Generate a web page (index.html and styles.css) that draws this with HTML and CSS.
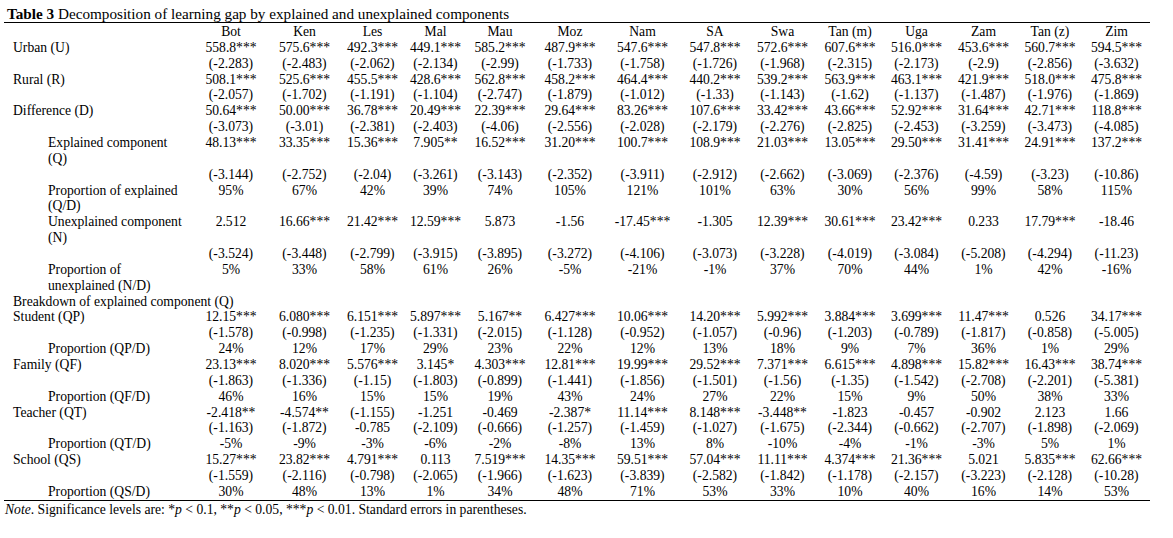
FILE: index.html
```html
<!DOCTYPE html>
<html>
<head>
<meta charset="utf-8">
<link rel="stylesheet" href="styles.css">
</head>
<body>
<div class="page">
  <div class="title"><b>Table 3</b> Decomposition of learning gap by explained and unexplained components</div>
  <table class="tbl">
    <colgroup>
      <col class="c-label"><col class="c82"><col class="c65"><col class="c71"><col class="c55"><col class="c74"><col class="c66"><col class="c79"><col class="c66"><col class="c69"><col class="c66"><col class="c67"><col class="c67"><col class="c66"><col class="c67">
    </colgroup>
    <thead>
      <tr class="head"><th></th><th>Bot</th><th>Ken</th><th>Les</th><th>Mal</th><th>Mau</th><th>Moz</th><th>Nam</th><th>SA</th><th>Swa</th><th>Tan (m)</th><th>Uga</th><th>Zam</th><th>Tan (z)</th><th>Zim</th></tr>
    </thead>
    <tbody>
      <tr><td class="lbl">Urban (U)</td><td>558.8***</td><td>575.6***</td><td>492.3***</td><td>449.1***</td><td>585.2***</td><td>487.9***</td><td>547.6***</td><td>547.8***</td><td>572.6***</td><td>607.6***</td><td>516.0***</td><td>453.6***</td><td>560.7***</td><td>594.5***</td></tr>
      <tr><td class="lbl"></td><td>(-2.283)</td><td>(-2.483)</td><td>(-2.062)</td><td>(-2.134)</td><td>(-2.99)</td><td>(-1.733)</td><td>(-1.758)</td><td>(-1.726)</td><td>(-1.968)</td><td>(-2.315)</td><td>(-2.173)</td><td>(-2.9)</td><td>(-2.856)</td><td>(-3.632)</td></tr>
      <tr><td class="lbl">Rural (R)</td><td>508.1***</td><td>525.6***</td><td>455.5***</td><td>428.6***</td><td>562.8***</td><td>458.2***</td><td>464.4***</td><td>440.2***</td><td>539.2***</td><td>563.9***</td><td>463.1***</td><td>421.9***</td><td>518.0***</td><td>475.8***</td></tr>
      <tr><td class="lbl"></td><td>(-2.057)</td><td>(-1.702)</td><td>(-1.191)</td><td>(-1.104)</td><td>(-2.747)</td><td>(-1.879)</td><td>(-1.012)</td><td>(-1.33)</td><td>(-1.143)</td><td>(-1.62)</td><td>(-1.137)</td><td>(-1.487)</td><td>(-1.976)</td><td>(-1.869)</td></tr>
      <tr><td class="lbl">Difference (D)</td><td>50.64***</td><td>50.00***</td><td>36.78***</td><td>20.49***</td><td>22.39***</td><td>29.64***</td><td>83.26***</td><td>107.6***</td><td>33.42***</td><td>43.66***</td><td>52.92***</td><td>31.64***</td><td>42.71***</td><td>118.8***</td></tr>
      <tr><td class="lbl"></td><td>(-3.073)</td><td>(-3.01)</td><td>(-2.381)</td><td>(-2.403)</td><td>(-4.06)</td><td>(-2.556)</td><td>(-2.028)</td><td>(-2.179)</td><td>(-2.276)</td><td>(-2.825)</td><td>(-2.453)</td><td>(-3.259)</td><td>(-3.473)</td><td>(-4.085)</td></tr>
      <tr><td class="lbl ind">Explained component<br>(Q)</td><td>48.13***</td><td>33.35***</td><td>15.36***</td><td>7.905**</td><td>16.52***</td><td>31.20***</td><td>100.7***</td><td>108.9***</td><td>21.03***</td><td>13.05***</td><td>29.50***</td><td>31.41***</td><td>24.91***</td><td>137.2***</td></tr>
      <tr><td class="lbl"></td><td>(-3.144)</td><td>(-2.752)</td><td>(-2.04)</td><td>(-3.261)</td><td>(-3.143)</td><td>(-2.352)</td><td>(-3.911)</td><td>(-2.912)</td><td>(-2.662)</td><td>(-3.069)</td><td>(-2.376)</td><td>(-4.59)</td><td>(-3.23)</td><td>(-10.86)</td></tr>
      <tr><td class="lbl ind">Proportion of explained<br>(Q/D)</td><td>95%</td><td>67%</td><td>42%</td><td>39%</td><td>74%</td><td>105%</td><td>121%</td><td>101%</td><td>63%</td><td>30%</td><td>56%</td><td>99%</td><td>58%</td><td>115%</td></tr>
      <tr><td class="lbl ind">Unexplained component<br>(N)</td><td>2.512</td><td>16.66***</td><td>21.42***</td><td>12.59***</td><td>5.873</td><td>-1.56</td><td>-17.45***</td><td>-1.305</td><td>12.39***</td><td>30.61***</td><td>23.42***</td><td>0.233</td><td>17.79***</td><td>-18.46</td></tr>
      <tr><td class="lbl"></td><td>(-3.524)</td><td>(-3.448)</td><td>(-2.799)</td><td>(-3.915)</td><td>(-3.895)</td><td>(-3.272)</td><td>(-4.106)</td><td>(-3.073)</td><td>(-3.228)</td><td>(-4.019)</td><td>(-3.084)</td><td>(-5.208)</td><td>(-4.294)</td><td>(-11.23)</td></tr>
      <tr><td class="lbl ind">Proportion of<br>unexplained (N/D)</td><td>5%</td><td>33%</td><td>58%</td><td>61%</td><td>26%</td><td>-5%</td><td>-21%</td><td>-1%</td><td>37%</td><td>70%</td><td>44%</td><td>1%</td><td>42%</td><td>-16%</td></tr>
      <tr><td class="lbl wide" colspan="15">Breakdown of explained component (Q)</td></tr>
      <tr><td class="lbl">Student (QP)</td><td>12.15***</td><td>6.080***</td><td>6.151***</td><td>5.897***</td><td>5.167**</td><td>6.427***</td><td>10.06***</td><td>14.20***</td><td>5.992***</td><td>3.884***</td><td>3.699***</td><td>11.47***</td><td>0.526</td><td>34.17***</td></tr>
      <tr><td class="lbl"></td><td>(-1.578)</td><td>(-0.998)</td><td>(-1.235)</td><td>(-1.331)</td><td>(-2.015)</td><td>(-1.128)</td><td>(-0.952)</td><td>(-1.057)</td><td>(-0.96)</td><td>(-1.203)</td><td>(-0.789)</td><td>(-1.817)</td><td>(-0.858)</td><td>(-5.005)</td></tr>
      <tr><td class="lbl ind">Proportion (QP/D)</td><td>24%</td><td>12%</td><td>17%</td><td>29%</td><td>23%</td><td>22%</td><td>12%</td><td>13%</td><td>18%</td><td>9%</td><td>7%</td><td>36%</td><td>1%</td><td>29%</td></tr>
      <tr><td class="lbl">Family (QF)</td><td>23.13***</td><td>8.020***</td><td>5.576***</td><td>3.145*</td><td>4.303***</td><td>12.81***</td><td>19.99***</td><td>29.52***</td><td>7.371***</td><td>6.615***</td><td>4.898***</td><td>15.82***</td><td>16.43***</td><td>38.74***</td></tr>
      <tr><td class="lbl"></td><td>(-1.863)</td><td>(-1.336)</td><td>(-1.15)</td><td>(-1.803)</td><td>(-0.899)</td><td>(-1.441)</td><td>(-1.856)</td><td>(-1.501)</td><td>(-1.56)</td><td>(-1.35)</td><td>(-1.542)</td><td>(-2.708)</td><td>(-2.201)</td><td>(-5.381)</td></tr>
      <tr><td class="lbl ind">Proportion (QF/D)</td><td>46%</td><td>16%</td><td>15%</td><td>15%</td><td>19%</td><td>43%</td><td>24%</td><td>27%</td><td>22%</td><td>15%</td><td>9%</td><td>50%</td><td>38%</td><td>33%</td></tr>
      <tr><td class="lbl">Teacher (QT)</td><td>-2.418**</td><td>-4.574**</td><td>(-1.155)</td><td>-1.251</td><td>-0.469</td><td>-2.387*</td><td>11.14***</td><td>8.148***</td><td>-3.448**</td><td>-1.823</td><td>-0.457</td><td>-0.902</td><td>2.123</td><td>1.66</td></tr>
      <tr><td class="lbl"></td><td>(-1.163)</td><td>(-1.872)</td><td>-0.785</td><td>(-2.109)</td><td>(-0.666)</td><td>(-1.257)</td><td>(-1.459)</td><td>(-1.027)</td><td>(-1.675)</td><td>(-2.344)</td><td>(-0.662)</td><td>(-2.707)</td><td>(-1.898)</td><td>(-2.069)</td></tr>
      <tr><td class="lbl ind">Proportion (QT/D)</td><td>-5%</td><td>-9%</td><td>-3%</td><td>-6%</td><td>-2%</td><td>-8%</td><td>13%</td><td>8%</td><td>-10%</td><td>-4%</td><td>-1%</td><td>-3%</td><td>5%</td><td>1%</td></tr>
      <tr><td class="lbl">School (QS)</td><td>15.27***</td><td>23.82***</td><td>4.791***</td><td>0.113</td><td>7.519***</td><td>14.35***</td><td>59.51***</td><td>57.04***</td><td>11.11***</td><td>4.374***</td><td>21.36***</td><td>5.021</td><td>5.835***</td><td>62.66***</td></tr>
      <tr><td class="lbl"></td><td>(-1.559)</td><td>(-2.116)</td><td>(-0.798)</td><td>(-2.065)</td><td>(-1.966)</td><td>(-1.623)</td><td>(-3.839)</td><td>(-2.582)</td><td>(-1.842)</td><td>(-1.178)</td><td>(-2.157)</td><td>(-3.223)</td><td>(-2.128)</td><td>(-10.28)</td></tr>
      <tr class="last"><td class="lbl ind">Proportion (QS/D)</td><td>30%</td><td>48%</td><td>13%</td><td>1%</td><td>34%</td><td>48%</td><td>71%</td><td>53%</td><td>33%</td><td>10%</td><td>40%</td><td>16%</td><td>14%</td><td>53%</td></tr>
    </tbody>
  </table>
  <div class="note"><i>Note</i>. Significance levels are: *<i>p</i> &lt; 0.1, **<i>p</i> &lt; 0.05, ***<i>p</i> &lt; 0.01. Standard errors in parentheses.</div>
</div>
</body>
</html>
```

FILE: styles.css
```css
html, body {
  margin: 0;
  padding: 0;
  background: #fff;
}
.page {
  padding: 5px 0 0 4px;
  font-family: "Liberation Serif", "Times New Roman", serif;
  color: #000;
  font-size: 13.65px;
  line-height: 15.86px;
}
.title {
  font-size: 15.2px;
  line-height: 17px;
  padding-left: 3px;
  white-space: nowrap;
}
.tbl {
  border-collapse: collapse;
  table-layout: fixed;
  width: 1146px;
  border-top: 1px solid #000;
  border-bottom: 1px solid #000;
}
.c-label { width: 186px; }
.c82 { width: 82px; }
.c65 { width: 65px; }
.c71 { width: 71px; }
.c55 { width: 55px; }
.c74 { width: 74px; }
.c66 { width: 66px; }
.c79 { width: 79px; }
.c69 { width: 69px; }
.c67 { width: 67px; }
.tbl th, .tbl td {
  padding: 0;
  text-align: center;
  vertical-align: top;
  font-weight: normal;
  white-space: nowrap;
}
.tbl .lbl {
  text-align: left;
  padding-left: 9px;
}
.tbl .lbl.ind {
  padding-left: 44px;
}
.head th {
  padding-top: 1px;
}
.note {
  padding-left: 1px;
  padding-top: 1px;
  white-space: nowrap;
}
```
